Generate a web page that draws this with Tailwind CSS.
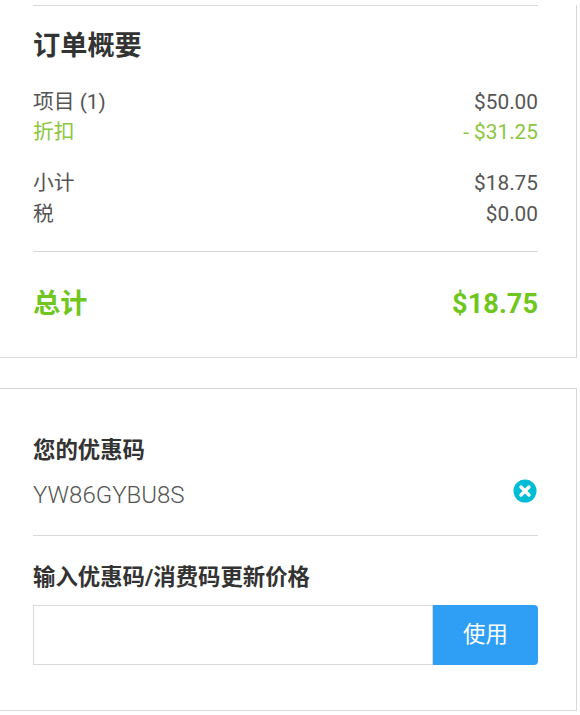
<!DOCTYPE html>
<html lang="zh">
<head>
<meta charset="utf-8">
<script src="https://cdn.jsdelivr.net/npm/@tailwindcss/browser@4"></script>
</head>
<body class="bg-white font-['Roboto','Noto_Sans_CJK_SC',sans-serif] text-[#555555]">
<div class="w-[577px] pt-[5px]">
  <section class="border-r border-b border-[#d8d8d8] pl-[33px] pr-[38px] h-[353px]">
    <div class="border-t border-[#d8d8d8] pt-[22px]">
      <h2 class="text-[27.2px] leading-[36px] font-bold text-[#333333]">订单概要</h2>
      <div class="mt-[23px] text-[20.8px] leading-[30px]">
        <div class="flex justify-between"><span>项目 (1)</span><span>$50.00</span></div>
        <div class="flex justify-between text-[#8cc63f]"><span>折扣</span><span>- $31.25</span></div>
      </div>
      <div class="mt-[21px] text-[20.8px] leading-[31px]">
        <div class="flex justify-between"><span>小计</span><span>$18.75</span></div>
        <div class="flex justify-between"><span>税</span><span>$0.00</span></div>
      </div>
      <div class="mt-[21px] border-t border-[#d8d8d8] pt-[34px] flex justify-between text-[27.2px] leading-[36px] font-bold text-[#6fc61e]"><span>总计</span><span>$18.75</span></div>
    </div>
  </section>
  <section class="mt-[30px] border-t border-r border-b border-[#d8d8d8] pl-[33px] pr-[38px] h-[323px] pt-[46px]">
    <h3 class="text-[22.4px] leading-[30px] font-bold text-[#333333]">您的优惠码</h3>
    <div class="mt-[15px] flex items-start justify-between pb-[25px] border-b border-[#d8d8d8]">
      <span class="text-[24px] leading-[30px] font-light">YW86GYBU8S</span>
      <svg class="w-[24px] h-[24px] -mt-px mr-px" viewBox="0 0 24 24"><circle cx="12" cy="12" r="11.5" fill="#00bcd4"/><path d="M8 8l8 8M16 8l-8 8" stroke="#fff" stroke-width="3.4" stroke-linecap="round"/></svg>
    </div>
    <h3 class="mt-[26px] text-[22.4px] leading-[30px] font-bold text-[#333333]">输入优惠码/消费码更新价格</h3>
    <div class="mt-[13px] flex h-[60px]">
      <input type="text" class="flex-1 min-w-0 border border-[#d8d8d8] bg-white">
      <button class="w-[105px] bg-[#2f9ff5] text-white text-[22.4px] rounded-r-[4px]">使用</button>
    </div>
  </section>
</div>
</body>
</html>
